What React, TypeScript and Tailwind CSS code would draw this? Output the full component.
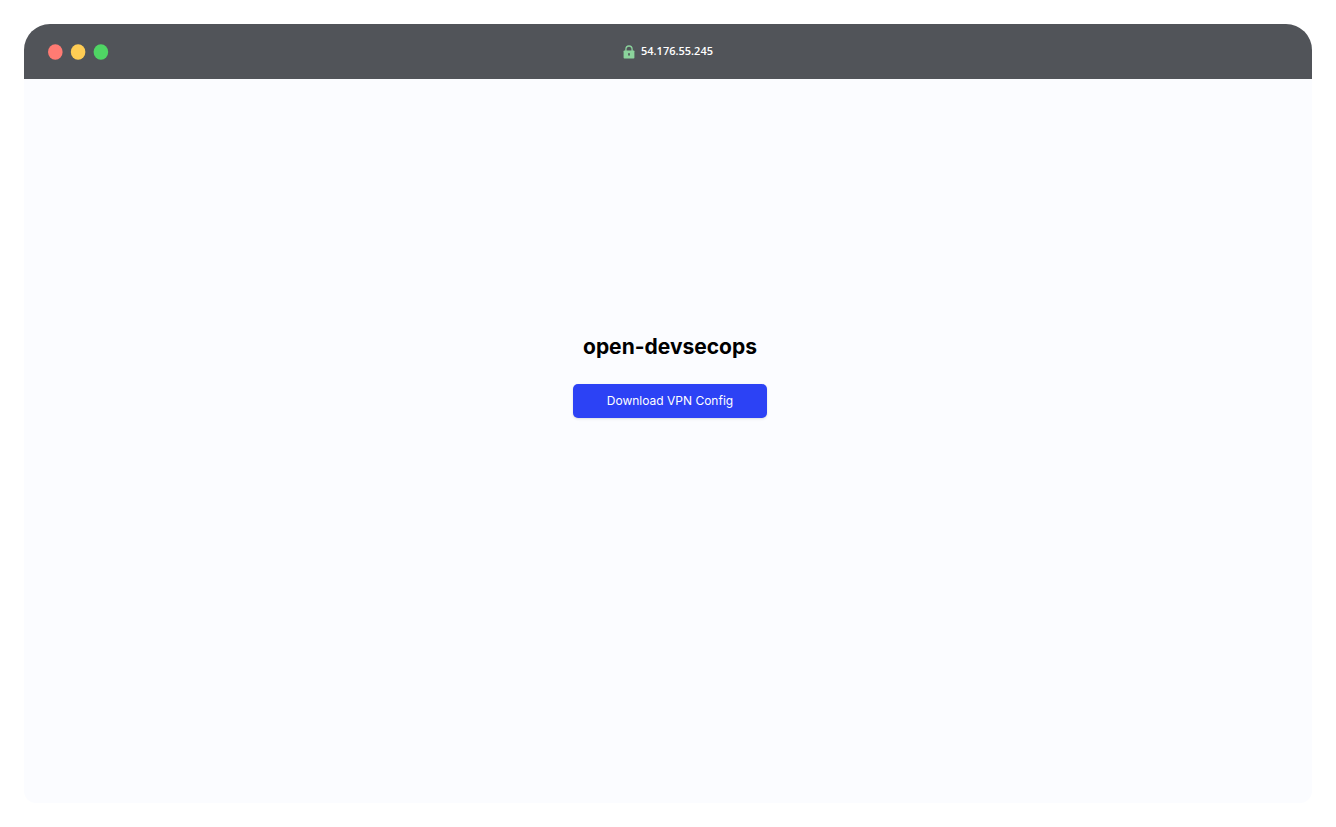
export default function App() {
  return (
    <div className="flex min-h-screen flex-col bg-white p-6 font-['Inter',sans-serif]">
      <div className="flex flex-1 flex-col overflow-hidden rounded-t-[26px] rounded-b-xl bg-[#fbfcff]">
        <header className="grid h-[55px] grid-cols-[1fr_auto_1fr] items-center bg-[#515459] px-6">
          <svg className="h-4 w-[61px]" viewBox="0 0 61 16" aria-hidden="true">
            <ellipse cx="7.3" cy="8" rx="7.3" ry="7.7" fill="#ff7b73" />
            <ellipse cx="30.1" cy="8" rx="7.3" ry="7.7" fill="#ffcd54" />
            <ellipse cx="52.9" cy="8" rx="7.3" ry="7.7" fill="#4fd564" />
          </svg>
          <div className="flex items-center gap-1.5 font-['Open_Sans',sans-serif] text-[11px] font-semibold text-white">
            <svg className="h-[14px] w-3" viewBox="0 0 12 14" aria-hidden="true">
              <path d="M2.9 6V4.4a3.1 3.4 0 0 1 6.2 0V6" fill="none" stroke="#8bd39c" strokeWidth="1.3" />
              <rect x="0.6" y="5.4" width="10.8" height="8.2" rx="0.8" fill="#8bd39c" />
              <circle cx="6" cy="9" r="0.9" fill="#515459" />
              <path d="M6 9v2" stroke="#515459" strokeWidth="0.9" />
            </svg>
            <span>54.176.55.245</span>
          </div>
        </header>
        <main className="flex flex-col items-center pt-[252px] pl-1">
          <h1 className="text-[21px] leading-8 font-bold text-black">open-devsecops</h1>
          <button type="button" className="mt-[21px] h-[34px] w-[194px] rounded-[5px] bg-[#2c42f5] text-xs text-white shadow">
            Download VPN Config
          </button>
        </main>
      </div>
    </div>
  );
}
